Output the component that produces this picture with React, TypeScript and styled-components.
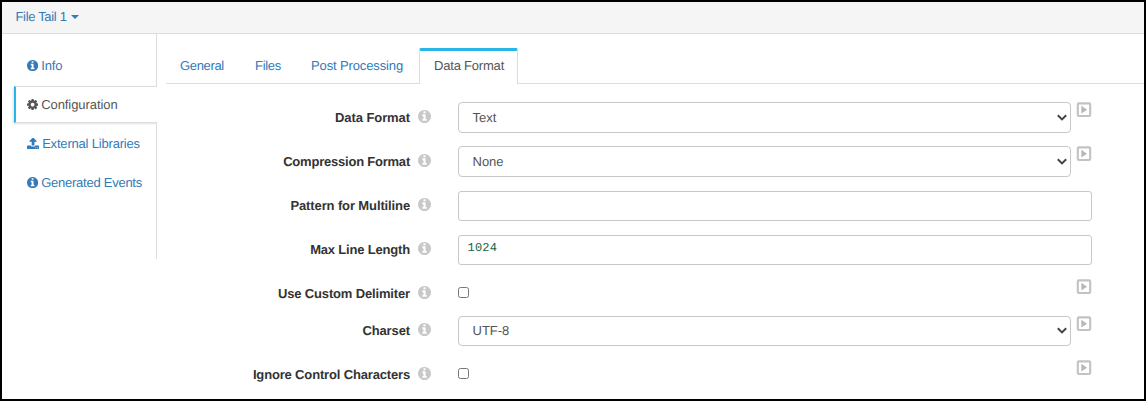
import React from "react";
import styled, { createGlobalStyle, css } from "styled-components";

const Global = createGlobalStyle`
  * { box-sizing: border-box; }
  body { margin: 0; background: #fff; }
`;

const Frame = styled.div`
  display: flex;
  flex-direction: column;
  width: 1146px;
  height: 401px;
  border: 2px solid #000;
  background: #fff;
  overflow: hidden;
  font: 13px/18px "Liberation Sans", Arial, sans-serif;
  text-rendering: geometricPrecision;
  color: #333;
`;

const Header = styled.header`
  display: flex;
  align-items: center;
  flex: none;
  height: 32px;
  padding: 0 0 2px 13.5px;
  background: #f5f5f5;
  border-bottom: 1px solid #ddd;
`;

const StageLink = styled.a`
  display: flex;
  align-items: center;
  color: #337ab7;
  letter-spacing: -0.33px;
`;

const Caret = styled.span`
  margin: 1px 0 0 4px;
  border-top: 4px solid #337ab7;
  border-left: 4px solid transparent;
  border-right: 4px solid transparent;
`;

const Body = styled.div`
  display: flex;
  flex: 1;
  min-height: 0;
`;

const Side = styled.nav`
  display: flex;
  flex-direction: column;
  width: 144px;
  height: 225px;
  margin-left: 11px;
`;

const SideItem = styled.a<{ $active?: boolean; $track?: number }>`
  display: flex;
  align-items: center;
  flex: none;
  height: 39px;
  padding-left: 14px;
  border-right: 1px solid #ddd;
  color: #337ab7;
  letter-spacing: ${(p) => p.$track ?? 0}px;
  white-space: nowrap;
  svg { margin-right: 3px; flex: none; }
  ${(p) =>
    p.$active &&
    css`
      height: 37px;
      margin-left: 1px;
      padding-left: 11px;
      border: solid #ddd;
      border-width: 1px 0;
      border-left: 2px solid #29b5e8;
      box-shadow: -1px 1px 2px rgba(0, 0, 0, 0.12);
      clip-path: inset(-4px 0 -4px -4px);
      color: #555;
    `}
`;

const SideSpace = styled.div<{ $h?: number }>`
  flex: ${(p) => (p.$h ? `0 0 ${p.$h}px` : "1")};
  border-right: 1px solid #ddd;
`;

const Main = styled.main`
  flex: 1;
  margin-left: 9px;
  padding-top: 14px;
`;

const Tabs = styled.div`
  display: flex;
  height: 36px;
  border-bottom: 1px solid #ddd;
`;

const Tab = styled.a<{ $w: number; $track: number; $active?: boolean }>`
  width: ${(p) => p.$w}px;
  height: 36px;
  padding: 9px 0 0 14px;
  color: #337ab7;
  letter-spacing: ${(p) => p.$track}px;
  white-space: nowrap;
  ${(p) =>
    p.$active &&
    css`
      padding: 6px 0 0 14px;
      border: 1px solid #ddd;
      border-top: 3px solid #29b5e8;
      border-bottom: 0;
      border-radius: 2px 2px 0 0;
      background: #fff;
      color: #555;
    `}
`;

const Form = styled.form`
  padding-top: 18px;
`;

const Row = styled.div<{ $h: number }>`
  display: flex;
  align-items: flex-start;
  height: ${(p) => p.$h}px;
`;

const Label = styled.label<{ $top: number; $track: number }>`
  width: 244px;
  padding-top: ${(p) => p.$top}px;
  font-weight: bold;
  letter-spacing: ${(p) => p.$track}px;
  text-align: right;
  white-space: nowrap;
`;

const Help = styled.span<{ $top: number }>`
  display: flex;
  width: 48px;
  padding: ${(p) => p.$top}px 0 0 7.7px;
  color: #c8c8c8;
`;

const Select = styled.div<{ $h: number }>`
  display: flex;
  align-items: center;
  justify-content: space-between;
  width: 613px;
  height: ${(p) => p.$h}px;
  padding: 0 3px 0 13.5px;
  border: 1px solid #c8c8c8;
  border-radius: 4px;
  color: #555;
`;

const Input = styled.div`
  width: 634px;
  height: 30px;
  padding: 4px 8.5px;
  border: 1px solid #c8c8c8;
  border-radius: 3px;
  font: 12px/17px "Liberation Mono", monospace;
  letter-spacing: 0.2px;
  color: #116644;
`;

const CheckArea = styled.div`
  width: 613px;
  padding-top: 8px;
`;

const Check = styled.span`
  display: block;
  width: 11px;
  height: 11px;
  border: 1px solid #767676;
  border-radius: 2.5px;
`;

const Toggle = styled.span`
  display: flex;
  margin-left: 5px;
`;

const paths = {
  info: "M1152 1376v-160q0-14-9-23t-23-9h-96v-512q0-14-9-23t-23-9h-320q-14 0-23 9t-9 23v160q0 14 9 23t23 9h96v320h-96q-14 0-23 9t-9 23v160q0 14 9 23t23 9h448q14 0 23-9t9-23zm-128-896v-160q0-14-9-23t-23-9h-192q-14 0-23 9t-9 23v160q0 14 9 23t23 9h192q14 0 23-9t9-23zm640 416q0 209-103 385.5t-279.5 279.5-385.5 103-385.5-103-279.5-279.5-103-385.5 103-385.5 279.5-279.5 385.5-103 385.5 103 279.5 279.5 103 385.5z",
  cog: "M1152 896q0-106-75-181t-181-75-181 75-75 181 75 181 181 75 181-75 75-181zm512-109v222q0 12-8 23t-20 13l-185 28q-19 54-39 91 35 50 107 138 10 12 10 25t-9 23q-27 37-99 108t-94 71q-12 0-26-9l-138-108q-44 23-91 38-16 136-29 186-7 28-36 28h-222q-14 0-24.5-8.5t-11.5-21.5l-28-184q-49-16-90-37l-141 107q-10 9-25 9-14 0-25-11-126-114-165-168-7-10-7-23 0-12 8-23 15-21 51-66.5t54-70.5q-27-50-41-99l-183-27q-13-2-21-12.5t-8-23.5v-222q0-12 8-23t19-13l186-28q14-46 39-92-40-57-107-138-10-12-10-24 0-10 9-23 26-36 98.5-107.5t94.5-71.5q13 0 26 10l138 107q44-23 91-38 16-136 29-186 7-28 36-28h222q14 0 24.5 8.5t11.5 21.5l28 184q49 16 90 37l142-107q9-9 24-9 13 0 25 10 129 119 165 170 7 8 7 22 0 12-8 23-15 21-51 66.5t-54 70.5q26 50 41 98l183 28q13 2 21 12.5t8 23.5z",
  upload: "M1344 1472q0-26-19-45t-45-19-45 19-19 45 19 45 45 19 45-19 19-45zm256 0q0-26-19-45t-45-19-45 19-19 45 19 45 45 19 45-19 19-45zm128-224v320q0 40-28 68t-68 28h-1472q-40 0-68-28t-28-68v-320q0-40 28-68t68-28h427q21 56 70.5 92t110.5 36h256q61 0 110.5-36t70.5-92h427q40 0 68 28t28 68zm-325-648q-17 40-59 40h-256v448q0 26-19 45t-45 19h-256q-26 0-45-19t-19-45v-448h-256q-42 0-59-40-17-39 14-69l448-448q18-19 45-19t45 19l448 448q31 30 14 69z",
};

const Icon = ({ name, size }: { name: keyof typeof paths; size: number }) => (
  <svg
    width={name === "upload" ? (size * 1664) / 1536 : size}
    height={size}
    viewBox={name === "upload" ? "64 128 1664 1536" : "128 128 1536 1536"}
    fill="currentColor"
  >
    <path d={paths[name]} />
  </svg>
);

const Chevron = () => (
  <svg width="10" height="8" viewBox="0 0 10 8" fill="none" stroke="#444" strokeWidth="2">
    <path d="M0.8 1.2 5 5.4 9.2 1.2" />
  </svg>
);

const PlayBox = () => (
  <svg width="16" height="16" viewBox="0 0 16 16">
    <rect x="1.8" y="1.4" width="12.4" height="12.6" rx="1.2" fill="none" stroke="#c2c2c2" strokeWidth="2.1" />
    <path d="M5.3 3.8v7.8l5.8-3.9z" fill="#b8b8b8" />
  </svg>
);

type Field = {
  label: string;
  track: number;
  kind: "select" | "input" | "check";
  value?: string;
  pitch: number;
  height?: number;
  top?: number;
};

const fields: Field[] = [
  { label: "Data Format", track: -0.08, kind: "select", value: "Text", pitch: 44, height: 31, top: 7 },
  { label: "Compression Format", track: -0.22, kind: "select", value: "None", pitch: 45, height: 31, top: 7 },
  { label: "Pattern for Multiline", track: -0.12, kind: "input", pitch: 44 },
  { label: "Max Line Length", track: -0.18, kind: "input", value: "1024", pitch: 44 },
  { label: "Use Custom Delimiter", track: -0.15, kind: "check", pitch: 37 },
  { label: "Charset", track: -0.12, kind: "select", value: "UTF-8", pitch: 44, height: 30 },
  { label: "Ignore Control Characters", track: -0.16, kind: "check", pitch: 36 },
];

export default function App() {
  return (
    <>
      <Global />
      <Frame>
        <Header>
          <StageLink>
            File Tail 1<Caret />
          </StageLink>
        </Header>
        <Body>
          <Side>
            <SideSpace $h={12} />
            <SideItem $track={-0.1}><Icon name="info" size={11.2} />Info</SideItem>
            <SideSpace $h={1} />
            <SideItem $active $track={-0.07}><Icon name="cog" size={11.2} />Configuration</SideItem>
            <SideSpace $h={1} />
            <SideItem $track={-0.19}><Icon name="upload" size={11.2} />External Libraries</SideItem>
            <SideItem $track={-0.25}><Icon name="info" size={11.2} />Generated Events</SideItem>
            <SideSpace />
          </Side>
          <Main>
            <Tabs>
              <Tab $w={75} $track={-0.35}>General</Tab>
              <Tab $w={56} $track={-0.3}>Files</Tab>
              <Tab $w={122} $track={-0.13}>Post Processing</Tab>
              <Tab $w={99} $track={-0.2} $active>Data Format</Tab>
            </Tabs>
            <Form>
              {fields.map((f) => (
                <Row key={f.label} $h={f.pitch}>
                  <Label $top={f.top ?? 6} $track={f.track}>{f.label}</Label>
                  <Help $top={(f.top ?? 6) + 1}><Icon name="info" size={13} /></Help>
                  {f.kind === "select" && (
                    <Select $h={f.height ?? 30}>
                      {f.value}
                      <Chevron />
                    </Select>
                  )}
                  {f.kind === "input" && <Input>{f.value}</Input>}
                  {f.kind === "check" && <CheckArea><Check /></CheckArea>}
                  {f.kind !== "input" && <Toggle><PlayBox /></Toggle>}
                </Row>
              ))}
            </Form>
          </Main>
        </Body>
      </Frame>
    </>
  );
}
